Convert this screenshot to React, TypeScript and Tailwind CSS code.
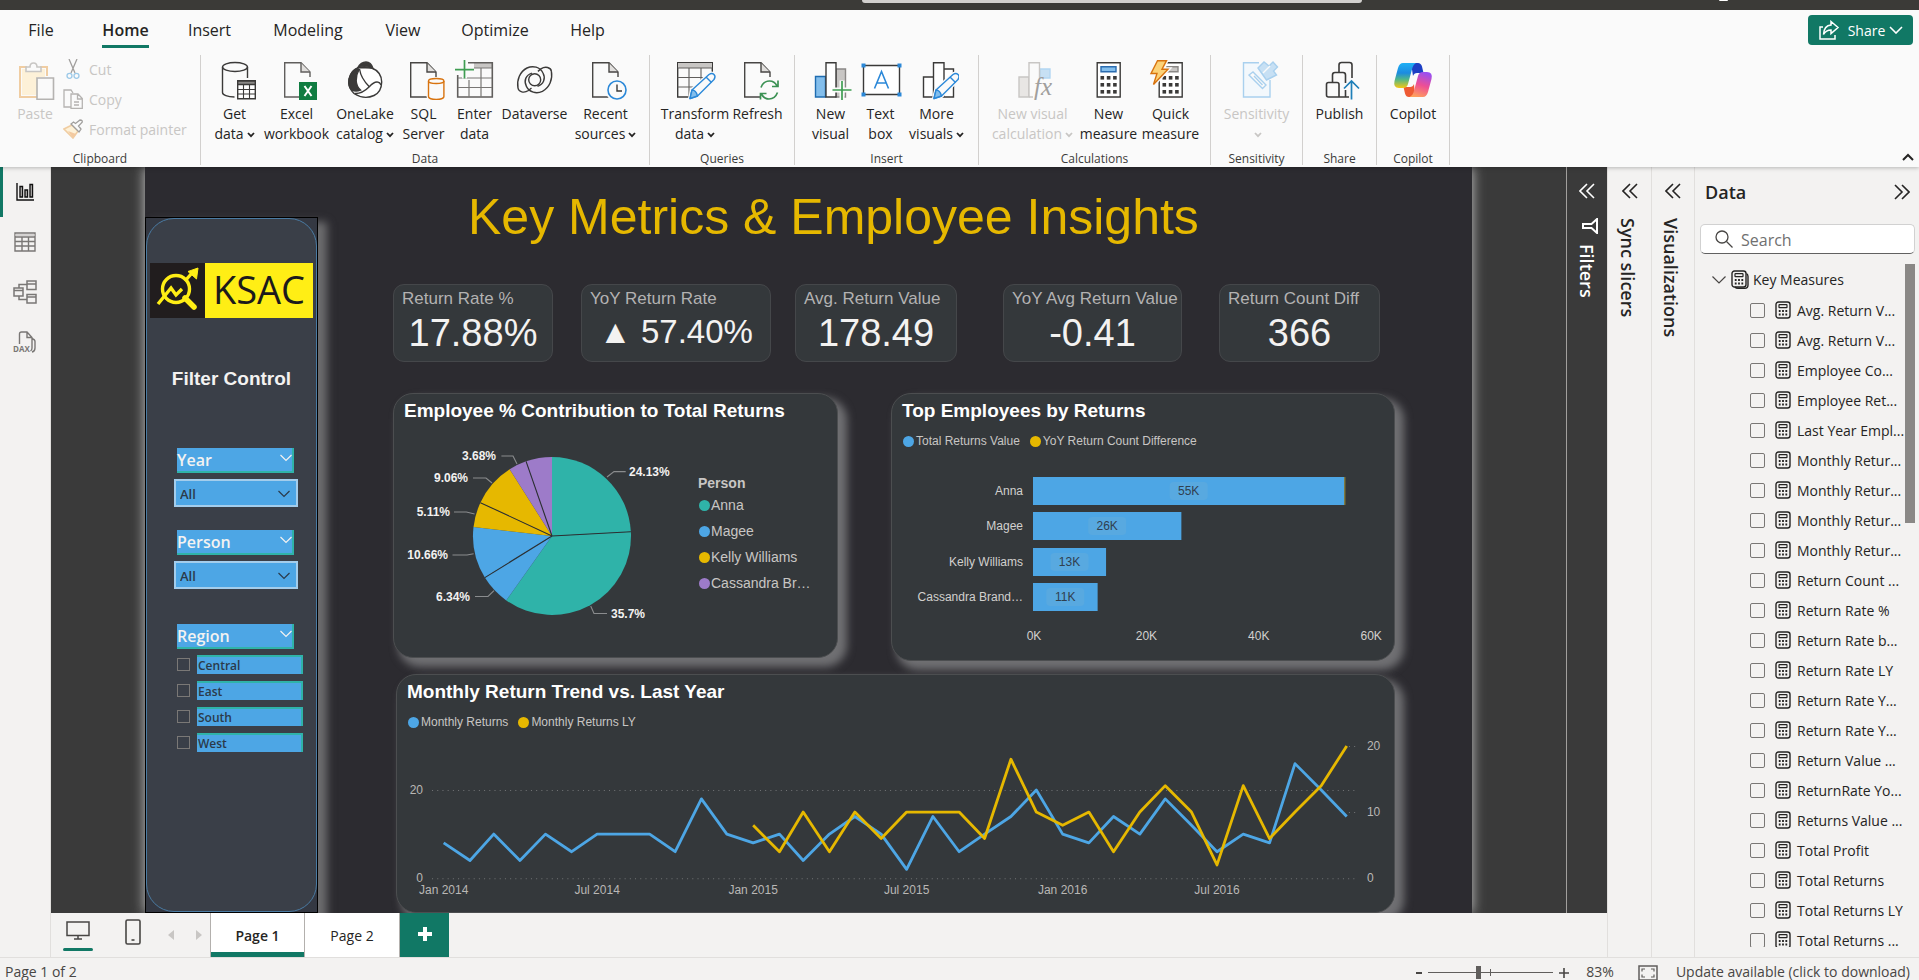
import type { ReactNode } from "react";

const INK = "#3b3a39";
const MUTED = "#c8c6c4";
const BLUE = "#4da6e5";
const YELLOW = "#e6b800";
const TEAL = "#2fb3a9";
const PURPLE = "#9d7bc9";

/* ---------- Ribbon icons ---------- */

function Ico({ children }: { children: ReactNode }) {
  return (
    <svg viewBox="0 0 44 40" className="h-10 w-11 shrink-0" fill="none" stroke={INK} strokeWidth="1.4" aria-hidden="true">
      {children}
    </svg>
  );
}

function DocShape({ x = 9, color = "#484644" }: { x?: number; color?: string }) {
  return (
    <g transform={`translate(${x} 0)`} stroke={color}>
      <path d="M26 17V12L17 2.700H.7V37H17" />
      <path d="M17 3V12h9" fill="#e1dfdd" />
    </g>
  );
}

function Pencil({ x = 0 }: { x?: number }) {
  return (
    <g transform={`translate(${x} 0)`} stroke="#2b88d8" strokeLinejoin="round">
      <path d="M17 38.5l2-8.5L36 14.5q3-2 5 0t0 5L24.500 36z" fill="#fafafa" stroke="#fafafa" strokeWidth="4" />
      <path d="M17 38.5l2-8.5L36 14.500q3-2 5 0t0 5L24.500 36z" fill="#fafafa" />
      <path d="M17 38.500l2-8.500q4 0 5.500 6z" fill="#83beec" />
      <path d="M33 17l5.500 5.500" />
    </g>
  );
}

const GetDataIcon = () => (
  <Ico>
    <ellipse cx="22" cy="7" rx="12.500" ry="4.500" />
    <path d="M9.500 7v25.500c0 2.500 5 4.500 12 4.500M34.500 7v11" />
    <path d="M24.700 20.700h17.600v18H24.700z" fill="#fff" />
    <path d="M24.700 21h17.600v3.500H24.700z" fill="#8a8886" />
    <path d="M24.700 29.500h17.600M24.700 34h17.600M30.500 24.500v14M36.500 24.500v14" strokeWidth="1.100" />
  </Ico>
);
const ExcelIcon = () => (
  <Ico>
    <DocShape color="#605e5c" />
    <path d="M24 22h18v18H24z" fill="#107c41" stroke="none" />
    <path d="M29.500 26l7 10M36.500 26l-7 10" stroke="#fff" strokeWidth="2" />
  </Ico>
);
const OneLakeIcon = () => (
  <Ico>
    <path d="M29 8Q38.500 12 38.700 22Q38.500 32 31 35.500Q21 40 11 33.500Q5 28 6 19Q8 10 16 7.500z" fill="#fff" />
    <path d="M14.500 8Q18 2 23 2t7 6.500Q22 5 14.500 8z" fill={INK} />
    <path d="M14 8.500C5 13 3.500 26 9 30C12 31.500 15 31 17.500 30C12 25 12 17 16 9.500z" fill={INK} />
    <path d="M16.500 9Q18 18.500 26.300 26.700M11.500 33.500Q19 34 26.300 26.700Q31 21.500 34.500 22Q37 22.300 38 25" />
  </Ico>
);
const SqlIcon = () => (
  <Ico>
    <DocShape x={8} />
    <path d="M26.500 21v15.500c0 1.700 3.500 3 7.700 3s7.700-1.300 7.700-3V21" fill="#fafafa" stroke="#fafafa" strokeWidth="4" />
    <path d="M26.500 21v15.500c0 1.700 3.500 3 7.700 3s7.700-1.300 7.700-3V21" fill="#fafafa" stroke="#d8730f" />
    <ellipse cx="34.200" cy="21" rx="7.700" ry="2.500" fill="#fafafa" stroke="#d8730f" />
  </Ico>
);
const EnterIcon = () => (
  <Ico>
    <path d="M21 3h18v5H21z" fill="#c8c6c4" stroke="none" />
    <path d="M15 2.700h24.300V37H4.700V15" stroke="#605e5c" strokeWidth="1.600" />
    <path d="M21 8h18M5 18h34M5 27.500h34M16 20v17M28 8v29" strokeWidth="1.200" stroke="#797775" />
    <path d="M11.500 0v18.500M2 9.700h19" stroke="#fafafa" strokeWidth="5" />
    <path d="M11.500 0v18.500M2 9.700h19" stroke="#3f9d52" strokeWidth="1.700" />
  </Ico>
);
const DATAVERSE_LEAF = "M24.500 26.300C30.500 24.500 33 18.500 30 13C27 7 20 5.200 14 8C7 11.500 3.500 20 5 28C5.500 32 11 33.500 15.500 30.500L18.500 28";
const DataverseIcon = () => (
  <Ico>
    <circle cx="21.700" cy="19.700" r="6" />
    <path d={DATAVERSE_LEAF} />
    <path d={DATAVERSE_LEAF} transform="rotate(180 21.700 19.700)" />
  </Ico>
);
const RecentIcon = () => (
  <Ico>
    <DocShape x={8} />
    <circle cx="33" cy="30" r="9" fill="#fafafa" stroke="#fafafa" strokeWidth="5" />
    <circle cx="33" cy="30" r="9" fill="#fafafa" stroke="#2b88d8" strokeWidth="1.600" />
    <path d="M33 24.500V31h5" />
  </Ico>
);
const TransformIcon = () => (
  <Ico>
    <path d="M4.700 2.700h34.600V37H4.700z" />
    <path d="M5 3h34v5H5z" fill="#c8c6c4" stroke="none" />
    <path d="M4.700 8h34.600M4.700 17.500h34.600M4.700 27h34.600M16 8v29M28 8v29" strokeWidth="1.100" stroke="#605e5c" />
    <path d="M24 38.500l17-19v19z" fill="#fafafa" stroke="none" />
    <Pencil />
  </Ico>
);
const RefreshIcon = () => (
  <Ico>
    <DocShape x={8} />
    <circle cx="33" cy="30" r="11" fill="#fafafa" stroke="none" />
    <path d="M25 27.500q2.500-6.500 8.500-6.500q5 0 7.500 5M42 20.500V26.500h-6M41.500 32.500q-2.500 6.500-8.500 6.500q-5 0-7.500-5M24.500 39.500V33.500h6" stroke="#3b9153" strokeWidth="1.700" />
  </Ico>
);
const NewVisualIcon = () => (
  <Ico>
    <path d="M27 9h9.500v28H27z" fill="#c8c6c4" stroke="#8a8886" />
    <path d="M6.500 16.500h10V37h-10z" fill="#83beec" stroke="#1f6cb0" />
    <path d="M17 2.700h10V37H17z" fill="#fff" />
    <path d="M33 20.500v20M23.500 30h19" stroke="#fafafa" strokeWidth="5" />
    <path d="M33 21v19M23.500 30h19" stroke="#3f9d52" strokeWidth="1.700" />
  </Ico>
);
const TextBoxIcon = () => (
  <Ico>
    <path d="M4.500 5.500h36v29h-36z" fill="#fff" />
    <path d="M2.500 3.500h4v4h-4zM38.500 3.500h4v4h-4zM2.500 32.500h4v4h-4zM38.500 32.500h4v4h-4z" fill="#2b88d8" stroke="none" />
    <path d="M15.500 28.500L22.500 11.500L29.500 28.500M18 23h9" stroke="#2b88d8" strokeWidth="1.600" />
  </Ico>
);
const MoreVisualsIcon = () => (
  <Ico>
    <path d="M29 9h9.500v28H29zM8.500 17h10v20h-10zM18.500 2.700h10.500V37H18.500z" fill="#fff" />
    <Pencil x={2} />
  </Ico>
);
const VisualCalcIcon = () => (
  <Ico>
    <g stroke="#c8c6c4">
      <path d="M8 17h10v20H8z" fill="#e8e6e4" />
      <path d="M29 9h10v9H29z" fill="#c7e0f4" stroke="#b3d6f2" />
      <path d="M18 37V2.700h10.500V19M18 37h4" fill="#fafafa" />
    </g>
    <text x="23" y="35" className="font-['Liberation_Serif',serif] text-[25px] italic" fill="#a19f9d" stroke="none">fx</text>
  </Ico>
);
function Keypad({ x }: { x: number }) {
  return (
    <g transform={`translate(${x} 0)`}>
      <path d="M.7 2.700h23V37H.7z" fill="#fff" />
      {[16, 23, 30].map((y) => [4, 10.3, 16.6].map((k) => <rect key={`${k}-${y}`} x={k} y={y} width="3.600" height="3.600" fill={INK} stroke="none" />))}
    </g>
  );
}
const NewMeasureIcon = () => (
  <Ico>
    <Keypad x={9.5} />
    <path d="M14 6.700h15v5H14z" fill="#83beec" stroke="#2b6cb0" />
  </Ico>
);
const QuickMeasureIcon = () => (
  <Ico>
    <Keypad x={9.5} />
    <path d="M18 6.700h11v5H18z" fill="#c8c6c4" stroke="#8a8886" />
    <path d="M8.500 .7h9l-4.500 8.500h6L4.500 24.500l3.500-11H2z" fill="#fce08a" stroke="#fafafa" strokeWidth="4" />
    <path d="M8.500 .7h9l-4.500 8.500h6L4.500 24.500l3.500-11H2z" fill="#fcd277" stroke="#d8730f" strokeWidth="1.400" />
  </Ico>
);
const SensitivityIcon = () => (
  <Ico>
    <g stroke="#a9d0ee">
      <path d="M24 2.700H8.500V37H35V20" fill="#f3f8fc" />
      <path d="M14 15l4-3 13 13-3.500 3.500z" fill="#fafafa" />
      <path d="M19 16l8.500 9" />
      <path d="M23 8l6-6 5 4 4-4 4.500 5-4 4 3 4-6 3-4 2z" fill="#c7e0f4" />
      <path d="M28 13l7-7" stroke="#fafafa" />
    </g>
  </Ico>
);
const PublishIcon = () => (
  <Ico>
    <g strokeWidth="1.600">
      <path d="M21 12V5q0-2.500 2.500-2.500h8Q34 2.500 34 5v13" />
      <path d="M14.500 22V15q0-2.500 2.500-2.500h8q2.500 0 2.500 2.500v8" />
      <path d="M8.500 24.500q0-2 2-2h8.500q2 0 2 2V37H10.500q-2 0-2-2zM21 37h10M27.500 30v7" />
    </g>
    <path d="M33.500 39.500V21M26 28.500L33.500 21l7.500 7.500" stroke="#1f7fb8" strokeWidth="1.700" />
  </Ico>
);
const CopilotIcon = () => (
  <Ico>
    <defs>
      <linearGradient id="cpA" x1="0" y1="0" x2="0" y2="1">
        <stop offset="0" stopColor="#1fb0f5" />
        <stop offset=".4" stopColor="#1c8be0" />
        <stop offset=".65" stopColor="#4fb68a" />
        <stop offset="1" stopColor="#f6c713" />
      </linearGradient>
      <linearGradient id="cpB" x1=".6" y1="0" x2=".3" y2="1">
        <stop offset="0" stopColor="#9a4ff0" />
        <stop offset=".5" stopColor="#ee4f94" />
        <stop offset="1" stopColor="#ffa15c" />
      </linearGradient>
    </defs>
    <g stroke="none">
      <path d="M20 3h7q3 0 4 3.500l1.500 6.500H26q-3 0-4 3z" fill="#1c3fc4" />
      <path d="M24 37h-6q-3 0-4-3.500L12.500 27H19q3 0 4-3z" fill="#ee5a33" />
      <path d="M12 3H25q-2.500 1-3.500 4.500L17 24q-1 4-5 4H8q-6 0-4.500-7L7 8q1.500-5 5-5z" fill="url(#cpA)" />
      <path d="M32 37H18.500q3-1 4-4.500L27 16q1-4 5-4h4q6 0 4.500 7L37 32q-1.500 5-5 5z" fill="url(#cpB)" />
    </g>
  </Ico>
);

/* ---------- Ribbon ---------- */

function Caret() {
  return (
    <svg viewBox="0 0 8 6" className="ml-[3px] inline-block h-[6px] w-2" fill="none" stroke="currentColor" strokeWidth="1.800" aria-hidden="true">
      <path d="M1 1l3 3.200L7 1" />
    </svg>
  );
}

type Cmd = { l1: string; l2?: string; caret?: boolean; w: string; icon: ReactNode; off?: boolean };

function Command({ l1, l2, caret, w, icon, off }: Cmd) {
  return (
    <button type="button" disabled={off} className={`${w} flex flex-col items-center text-[14px] leading-5 whitespace-nowrap ${off ? "text-[#c8c6c4]" : "text-[#252423]"}`}>
      {icon}
      <span className="mt-1">{l1}</span>
      {(l2 || caret) && (
        <span>
          {l2}
          {caret && <Caret />}
        </span>
      )}
    </button>
  );
}

function Group({ name, cmds, className = "", children }: { name: string; cmds?: Cmd[]; className?: string; children?: ReactNode }) {
  return (
    <section aria-label={name} className={`${className} flex h-[110px] shrink-0 flex-col border-r border-[#d2d0ce]`}>
      <div className="flex h-[95px] shrink-0 items-start justify-center pt-[5px]">
        {children}
        {cmds?.map((c) => <Command key={c.l1 + c.l2} {...c} />)}
      </div>
      <h2 className="shrink-0 text-center text-[12px] leading-[17px] text-[#3b3a39]">{name}</h2>
    </section>
  );
}

const TABS = [
  { t: "File", w: "w-[82px]" },
  { t: "Home", w: "w-[87px]" },
  { t: "Insert", w: "w-[81px]" },
  { t: "Modeling", w: "w-[116px]" },
  { t: "View", w: "w-[74px]" },
  { t: "Optimize", w: "w-[110px]" },
  { t: "Help", w: "w-[75px]" },
];

function Ribbon() {
  return (
    <header className="relative z-10 shrink-0 bg-[#fafafa] shadow-[0_1px_4px_rgba(0,0,0,0.25)]">
      <div className="relative flex h-[10px] justify-center bg-[#3b3a37]">
        <div className="ml-[305px] h-[3px] w-[500px] rounded-b-sm bg-[#d2d0ce]" />
        <span className="absolute top-0 right-[191px] h-px w-[9px] rounded-b bg-white" />
      </div>
      <div className="flex h-[45px] items-start justify-between pr-[6px]">
        <nav aria-label="Ribbon tabs" className="flex">
          {TABS.map(({ t, w }) => (
            <button key={t} type="button" className={`${w} flex justify-center text-[16px] leading-6 text-[#252423]`}>
              <span className={`mt-2 h-[30px] border-b-3 ${t === "Home" ? "border-[#117865] font-semibold" : "border-transparent"}`}>{t}</span>
            </button>
          ))}
        </nav>
        <button type="button" className="mt-[5px] flex h-[30px] w-[105px] items-center justify-center gap-2 rounded bg-[#117865] text-[14px] text-white">
          <svg viewBox="0 0 22 20" className="h-5 w-[22px]" fill="none" stroke="#fff" strokeWidth="1.500" aria-hidden="true">
            <path d="M5 7H2v12h15v-4" />
            <path d="M13 1.500L20 7.500l-7 6V10q-5 0-7.500 4.500Q6 5.500 13 5z" />
          </svg>
          <span className="flex items-center">
            Share
            <svg viewBox="0 0 14 8" className="ml-1 h-2 w-[14px]" fill="none" stroke="#fff" strokeWidth="1.600" aria-hidden="true">
              <path d="M1 1l6 6 6-6" />
            </svg>
          </span>
        </button>
      </div>
      <div className="flex h-[112px] items-start">
        <Group name="Clipboard" className="w-[201px]">
          <div className="flex w-full gap-2 pl-[15px] text-[14px] text-[#c8c6c4]">
            <button type="button" disabled className="flex w-10 flex-col items-center leading-5">
              <svg viewBox="0 0 40 40" className="h-10 w-10" fill="none" strokeWidth="1.600" aria-hidden="true">
                <path d="M22 37H5V7h7M25 7h7v9" stroke="#f0cda2" strokeWidth="2" />
                <path d="M7 9h4v3h15V9h4v8h-8v18H7z" fill="#fdf1d8" />
                <path d="M11 11.500V7h4q0-4 3.500-4T22 7h4v4.500z" stroke={MUTED} fill="#fafafa" />
                <path d="M22 18h16.500v21.300H22z" stroke="#b5b3b1" fill="#fafafa" />
              </svg>
              <span className="mt-1">Paste</span>
            </button>
            <div className="-mt-px flex flex-col">
              <button type="button" disabled className="flex h-5 items-center gap-[6px]">
                <svg viewBox="0 0 20 20" className="h-5 w-5" fill="none" aria-hidden="true">
                  <path d="M6 0l6 14M14 0L8 14" stroke="#a19f9d" strokeWidth="1.300" />
                  <circle cx="6.500" cy="16.800" r="2.500" stroke="#9cc9e8" strokeWidth="1.300" />
                  <circle cx="13.500" cy="16.800" r="2.500" stroke="#9cc9e8" strokeWidth="1.300" />
                </svg>
                Cut
              </button>
              <button type="button" disabled className="mt-[10px] flex h-5 items-center gap-[6px]">
                <svg viewBox="0 0 20 20" className="h-5 w-5" fill="none" stroke="#b5b3b1" strokeWidth="1.300" aria-hidden="true">
                  <path d="M8 18H1V1h7l2 3" />
                  <path d="M8 5h7l4.300 4.500V19.300H8zM14.500 5v5h5M11 13h5M11 16h5" fill="#fafafa" />
                </svg>
                Copy
              </button>
              <button type="button" disabled className="mt-[10px] flex h-5 items-center gap-[6px]">
                <svg viewBox="0 0 20 20" className="h-5 w-5" fill="none" strokeWidth="1.300" aria-hidden="true">
                  <path d="M9 6L1 10l9 9 5-7z" fill="#fdf1d8" stroke="#f0cda2" strokeWidth="1.600" />
                  <path d="M5 12l8 3-3 4z" fill="#f3c9a0" />
                  <path d="M8 5l8 8 2-3-2.500-3L19 3.500Q20 1 17 1L12.500 4.500 10.500 3z" stroke="#a19f9d" fill="#fafafa" />
                </svg>
                Format painter
              </button>
            </div>
          </div>
        </Group>
        <Group
          name="Data"
          className="w-[449px]"
          cmds={[
            { l1: "Get", l2: "data", caret: true, w: "w-[52px]", icon: <GetDataIcon /> },
            { l1: "Excel", l2: "workbook", w: "w-[72px]", icon: <ExcelIcon /> },
            { l1: "OneLake", l2: "catalog", caret: true, w: "w-[65px]", icon: <OneLakeIcon /> },
            { l1: "SQL", l2: "Server", w: "w-[52px]", icon: <SqlIcon /> },
            { l1: "Enter", l2: "data", w: "w-[50px]", icon: <EnterIcon /> },
            { l1: "Dataverse", w: "w-[70px]", icon: <DataverseIcon /> },
            { l1: "Recent", l2: "sources", caret: true, w: "w-[72px]", icon: <RecentIcon /> },
          ]}
        />
        <Group
          name="Queries"
          className="w-[145px]"
          cmds={[
            { l1: "Transform", l2: "data", caret: true, w: "w-[71px]", icon: <TransformIcon /> },
            { l1: "Refresh", w: "w-[54px]", icon: <RefreshIcon /> },
          ]}
        />
        <Group
          name="Insert"
          className="w-[184px]"
          cmds={[
            { l1: "New", l2: "visual", w: "w-[50px]", icon: <NewVisualIcon /> },
            { l1: "Text", l2: "box", w: "w-[50px]", icon: <TextBoxIcon /> },
            { l1: "More", l2: "visuals", caret: true, w: "w-[62px]", icon: <MoreVisualsIcon /> },
          ]}
        />
        <Group
          name="Calculations"
          className="w-[232px]"
          cmds={[
            { l1: "New visual", l2: "calculation", caret: true, w: "w-[89px]", icon: <VisualCalcIcon />, off: true },
            { l1: "New", l2: "measure", w: "w-[63px]", icon: <NewMeasureIcon /> },
            { l1: "Quick", l2: "measure", w: "w-[61px]", icon: <QuickMeasureIcon /> },
          ]}
        />
        <Group name="Sensitivity" className="w-[92px]" cmds={[{ l1: "Sensitivity", caret: true, w: "w-20", icon: <SensitivityIcon />, off: true }]} />
        <Group name="Share" className="w-[74px]" cmds={[{ l1: "Publish", w: "w-16", icon: <PublishIcon /> }]} />
        <Group name="Copilot" className="w-[73px]" cmds={[{ l1: "Copilot", w: "w-16", icon: <CopilotIcon /> }]} />
        <button type="button" aria-label="Collapse ribbon" className="mr-[5px] mb-[6px] ml-auto self-end">
          <svg viewBox="0 0 12 8" className="h-2 w-3" fill="none" stroke="#252423" strokeWidth="2" aria-hidden="true">
            <path d="M1 7l5-5 5 5" />
          </svg>
        </button>
      </div>
    </header>
  );
}

/* ---------- Left rail ---------- */

function LeftRail() {
  const btn = "flex h-[50px] w-full items-center justify-center border-l-3 pr-1";
  return (
    <nav aria-label="Views" className="flex w-[51px] shrink-0 flex-col border-r border-[#e1dfdd] bg-[#f3f2f1]">
      <button type="button" aria-label="Report view" className={`${btn} border-[#117865]`}>
        <svg viewBox="0 0 18 18" className="h-[18px] w-[18px]" fill="none" stroke="#111" strokeWidth="1.400" aria-hidden="true">
          <path d="M1 0v17h17" />
          <path d="M4 3.500h2.500V14H4zM9 7h2.500v7H9zM14 1.500h2.500V14H14z" fill="#c8c6c4" />
        </svg>
      </button>
      <button type="button" aria-label="Table view" className={`${btn} border-transparent`}>
        <svg viewBox="0 0 22 20" className="h-5 w-[22px]" fill="none" stroke="#797775" strokeWidth="1.400" aria-hidden="true">
          <path d="M1 1h20v18H1zM1 5h20M1 9.500h20M1 14h20M8 5v14M14.500 5v14" />
          <path d="M1 3h20" stroke="#c8c6c4" />
        </svg>
      </button>
      <button type="button" aria-label="Model view" className={`${btn} border-transparent`}>
        <svg viewBox="0 0 24 24" className="h-6 w-6" fill="none" stroke="#797775" strokeWidth="1.500" aria-hidden="true">
          <path d="M1 8h9v8H1zM1 10.500h9M14 1h9v8.500h-9zM14 4h9M14 14.500h9V23h-9zM14 17h9M6 8V4.500h8M6 16v3.500h8" />
        </svg>
      </button>
      <button type="button" aria-label="DAX query view" className={`${btn} border-transparent`}>
        <svg viewBox="0 0 24 22" className="h-[22px] w-6" fill="none" stroke="#797775" strokeWidth="1.400" aria-hidden="true">
          <path d="M6.500 13V3q0-2 2-2H14l5 5.500V17q0 2-1.500 3M14 1v5.500h5M19 7.500q3 1 3 3V17q0 3.500-3 4" />
          <text x="0" y="21" className="font-['Open_Sans',sans-serif] text-[8px] font-bold" fill="#797775" stroke="none">DAX</text>
        </svg>
      </button>
    </nav>
  );
}

/* ---------- Report: filter panel ---------- */

function Chevron({ className = "" }: { className?: string }) {
  return (
    <svg viewBox="0 0 12 8" className={`h-2 w-3 ${className}`} fill="none" stroke="currentColor" strokeWidth="1.200" aria-hidden="true">
      <path d="M.5 1L6 6.500 11.500 1" />
    </svg>
  );
}

function SlicerHead({ id, title }: { id: string; title: string }) {
  return (
    <div className="ml-[3px] flex h-[25px] w-[117px] justify-between border-r-2 border-b-2 border-[#2fb3a9] bg-[#4da6e5] text-[#f3f2f1]">
      <label htmlFor={id} className="text-[16px] leading-6 font-semibold">{title}</label>
      <Chevron className="mt-[6px]" />
    </div>
  );
}

function SlicerSelect({ id, title }: { id: string; title: string }) {
  return (
    <div className="flex w-[124px] flex-col gap-[6px]">
      <SlicerHead id={id} title={title} />
      <div className="relative text-[#2b3a4a]">
        <select id={id} className="h-7 w-full appearance-none border-2 border-[#a3cdec] bg-[#4da6e5] pt-[2px] pl-1 text-[13px] leading-5 font-semibold">
          <option>All</option>
        </select>
        <Chevron className="pointer-events-none absolute top-[11px] right-2" />
      </div>
    </div>
  );
}

function FilterPanel() {
  return (
    <aside aria-label="Filter control" className="relative mt-[50px] flex w-[173px] shrink-0 border border-black bg-[#343842] shadow-[7px_7px_8px_2px_#6c6c6e]">
      <div className="flex flex-1 flex-col rounded-[28px] border border-[#4a7ba3] bg-[#3a3f48] pt-11">
        <div className="mx-[3px] flex h-[55px] text-[#1c1a1b]">
          <svg viewBox="0 0 55 55" className="h-full w-[55px] bg-[#211d1e]" fill="none" stroke="#ffee15" aria-hidden="true">
            <circle cx="26" cy="26" r="13.500" strokeWidth="3.400" />
            <path d="M8 41l13-16 5 7 6-6M35 18l7-8" strokeWidth="3.400" />
            <path d="M35 35l9 9" strokeWidth="5.500" strokeLinecap="round" />
            <path d="M38 8.500L48 5l-1.500 11z" fill="#ffee15" />
          </svg>
          <div className="flex flex-1 items-center justify-center bg-[#ffee15] pb-[3px] text-[38px] leading-none">KSAC</div>
        </div>
        <h2 className="mt-[49px] text-center font-['Liberation_Sans',Arial,sans-serif] text-[19px] leading-6 font-bold text-[#f3f2f1]">Filter Control</h2>
        <div className="mt-[57px] flex flex-col pl-[27px]">
          <SlicerSelect id="year" title="Year" />
          <div className="mt-[23px]">
            <SlicerSelect id="person" title="Person" />
          </div>
          <fieldset className="mt-[35px] flex flex-col gap-[7px]">
            <legend className="mb-[6px]">
              <SlicerHead id="region-central" title="Region" />
            </legend>
            {["Central", "East", "South", "West"].map((r) => (
              <div key={r} className="flex h-[19px] items-center gap-[7px] pl-[3px]">
                <input id={`region-${r.toLowerCase()}`} type="checkbox" className="h-[13px] w-[13px] appearance-none border border-[#7a7876]" />
                <label htmlFor={`region-${r.toLowerCase()}`} className="h-full w-[106px] border-t-2 border-r-2 border-[#2fb3a9] bg-[#4da6e5] pl-px text-[12px] leading-[18px] font-semibold text-[#2b3a4a]">{r}</label>
              </div>
            ))}
          </fieldset>
        </div>
      </div>
    </aside>
  );
}

/* ---------- Report: KPI cards and charts ---------- */

function Kpi({ label, value, small }: { label: string; value: string; small?: boolean }) {
  return (
    <article className="flex h-[78px] flex-col rounded-[11px] border border-[#45474a] bg-[#34383b] pt-1 whitespace-nowrap">
      <h3 className="pl-2 text-[17px] leading-5 text-[#b3b2b2]">{label}</h3>
      <p className={`text-center ${small ? "text-[33px] leading-[46px]" : "text-[38px] leading-[49px]"} text-[#f3f2f1]`}>{value}</p>
    </article>
  );
}

function Card({ title, className = "", children }: { title: string; className?: string; children: ReactNode }) {
  return (
    <section className={`${className} flex flex-col rounded-[20px] border border-[#4c4e50] bg-[#34383b] px-[10px] pt-[5px] shadow-[7px_7px_8px_2px_#707073]`}>
      <h2 className="text-[19px] leading-6 font-bold whitespace-nowrap text-white">{title}</h2>
      {children}
    </section>
  );
}

function Legend({ items }: { items: { name: string; color: string }[] }) {
  return (
    <ul className="mt-[9px] flex h-[18px] items-center gap-[10px] pl-px text-[12px] text-[#c8c6c4]">
      {items.map((i) => (
        <li key={i.name} className="flex items-center gap-[2px] whitespace-nowrap">
          <svg viewBox="0 0 11 11" className="h-[11px] w-[11px]" aria-hidden="true">
            <circle cx="5.500" cy="5.500" r="5.500" fill={i.color} />
          </svg>
          {i.name}
        </li>
      ))}
    </ul>
  );
}

const SLICES = [
  { v: 24.13, c: TEAL },
  { v: 35.7, c: TEAL },
  { v: 6.34, c: BLUE },
  { v: 10.66, c: BLUE },
  { v: 5.11, c: YELLOW },
  { v: 9.06, c: YELLOW },
  { v: 3.68, c: PURPLE },
  { v: 5.32, c: PURPLE },
];
const PIE_LABELS = [
  { t: "24.13%", x: 225, y: 48, a: "start", p: "203,53 210,47.600 221.700,47.600" },
  { t: "35.7%", x: 207, y: 190, a: "start", p: "186.700,182 190,189.500 203,189.500" },
  { t: "6.34%", x: 66, y: 173, a: "end", p: "71,172.500 84,172.500 90,166.700" },
  { t: "10.66%", x: 44, y: 131, a: "end", p: "48.500,131 63,131 69.600,129.700" },
  { t: "5.11%", x: 46, y: 88, a: "end", p: "50,88 62.400,88 70.600,90" },
  { t: "9.06%", x: 64, y: 54, a: "end", p: "69,54 82,54 88,59" },
  { t: "3.68%", x: 92, y: 32, a: "end", p: "97.400,32 109,32 113,40" },
] as const;

function pieGeometry() {
  const cx = 148;
  const cy = 112;
  const r = 79;
  let acc = 0;
  const point = (f: number) => {
    const a = f * 2 * Math.PI;
    return `${(cx + r * Math.sin(a)).toFixed(2)} ${(cy - r * Math.cos(a)).toFixed(2)}`;
  };
  return SLICES.map((s, i) => {
    const from = point(acc / 100);
    acc += s.v;
    const to = point(acc / 100);
    return {
      d: `M${cx} ${cy}L${from}A${r} ${r} 0 0 1 ${to}Z`,
      cut: i % 2 === 0 ? `M${cx} ${cy}L${to}` : null,
      c: s.c,
    };
  });
}

function PieCard() {
  const parts = pieGeometry();
  return (
    <Card title="Employee % Contribution to Total Returns" className="h-[265px]">
      <div className="mt-px flex gap-[13px]">
        <svg viewBox="0 0 280 216" className="h-[216px] w-[280px] shrink-0" role="img" aria-label="Share of total returns by person">
          {parts.map((p, i) => <path key={i} d={p.d} fill={p.c} />)}
          {parts.map((p, i) => p.cut && <path key={i} d={p.cut} stroke="#2c3033" strokeWidth="1.100" />)}
          {PIE_LABELS.map((l) => (
            <g key={l.t}>
              <polyline points={l.p} fill="none" stroke="#8a8c8e" strokeWidth="1.100" />
              <text x={l.x} y={l.y + 4} textAnchor={l.a} fill="#f3f2f1" className="text-[12px] font-bold">{l.t}</text>
            </g>
          ))}
        </svg>
        <div className="pt-[50px] text-[14px] whitespace-nowrap text-[#c8c6c4]">
          <h3 className="pl-px leading-[18px] font-bold">Person</h3>
          <ul>
            {[
              ["Anna", TEAL],
              ["Magee", BLUE],
              ["Kelly Williams", YELLOW],
              ["Cassandra Br…", PURPLE],
            ].map(([n, c]) => (
              <li key={n} className="flex h-[26px] items-center gap-px pl-[2px]">
                <svg viewBox="0 0 11 11" className="h-[11px] w-[11px]" aria-hidden="true">
                  <circle cx="5.500" cy="5.500" r="5.500" fill={c} />
                </svg>
                {n}
              </li>
            ))}
          </ul>
        </div>
      </div>
    </Card>
  );
}

const BARS = [
  { n: "Anna", k: 55.4, t: "55K", y: 27 },
  { n: "Magee", k: 26.4, t: "26K", y: 62 },
  { n: "Kelly Williams", k: 13, t: "13K", y: 98 },
  { n: "Cassandra Brand…", k: 11.5, t: "11K", y: 133 },
];

function BarCard() {
  const x0 = 131;
  const perK = 5.62;
  return (
    <Card title="Top Employees by Returns">
      <Legend items={[{ name: "Total Returns Value", color: BLUE }, { name: "YoY Return Count Difference", color: YELLOW }]} />
      <svg viewBox="0 0 482 200" className="w-full text-[12px]" role="img" aria-label="Returns value by employee">
        {BARS.map((b) => {
          const w = b.k * perK;
          return (
            <g key={b.n}>
              <text x="121" y={b.y + 18} textAnchor="end" fill="#d2d0ce">{b.n}</text>
              <rect x={x0} y={b.y} width={w} height="28" fill={BLUE} />
              <rect x={x0 + w / 2 - 19} y={b.y + 5} width="38" height="18" rx="4" fill="#58a9e0" />
              <text x={x0 + w / 2} y={b.y + 18} textAnchor="middle" fill="#30404f">{b.t}</text>
            </g>
          );
        })}
        <rect x={x0 + 55.4 * perK} y="27" width="1" height="28" fill="#a08a28" />
        {[0, 20, 40, 60].map((k) => (
          <text key={k} x={x0 + 1 + k * perK} y="190" textAnchor="middle" fill="#d2d0ce">{k}K</text>
        ))}
      </svg>
    </Card>
  );
}

const MONTHLY = [8, 4, 10, 4, 10, 6, 10, 10, 10, 6, 18, 10, 8, 10, 4, 10, 14, 10, 2, 14, 6, 10, 14, 20, 10, 8, 14, 10, 18, 12, 6, 10, 8, 26, 20, 14];
const MONTHLY_LY = [8, 4, 10, 4, 10, 6, 10, 10, 10, 6, 18, 10, 8, 10, 4, 10, 14, 10, 2, 14, 6, 10, 14, 20];

function monthX(i: number) {
  const days = (Date.UTC(2014, i, 1) - Date.UTC(2014, 0, 1)) / 86400000;
  return 36.6 + days * 0.8471;
}

function TrendCard() {
  const blue = MONTHLY.map((v, i) => `${monthX(i).toFixed(1)},${(147 - v * 4.4).toFixed(1)}`).join(" ");
  const gold = MONTHLY_LY.map((v, i) => `${monthX(i + 12).toFixed(1)},${(147 - v * 6.6).toFixed(1)}`).join(" ");
  return (
    <Card title="Monthly Return Trend vs. Last Year" className="ml-[3px] min-h-0 flex-1">
      <Legend items={[{ name: "Monthly Returns", color: BLUE }, { name: "Monthly Returns LY", color: YELLOW }]} />
      <svg viewBox="0 0 976 176" className="w-full text-[12px]" fill="none" role="img" aria-label="Monthly returns against last year">
        <g stroke="#737577" strokeDasharray="1 4.200">
          <path d="M25 59.500H950M25 147.500H950M941 15.500H950M941 81.500H950" />
        </g>
        <polyline points={blue} stroke={BLUE} strokeWidth="2.800" strokeLinejoin="round" />
        <polyline points={gold} stroke={YELLOW} strokeWidth="2.800" strokeLinejoin="round" />
        <g fill="#b9b7b5">
          <text x="16" y="63" textAnchor="end">20</text>
          <text x="16" y="151" textAnchor="end">0</text>
          <text x="959" y="19">20</text>
          <text x="959" y="85">10</text>
          <text x="959" y="151">0</text>
          {["Jan 2014", "Jul 2014", "Jan 2015", "Jul 2015", "Jan 2016", "Jul 2016"].map((m, i) => (
            <text key={m} x={monthX(i * 6)} y="163" textAnchor="middle">{m}</text>
          ))}
        </g>
      </svg>
    </Card>
  );
}

function Report() {
  return (
    <div className="flex min-w-0 flex-1 overflow-hidden bg-[#3a3a3a] px-[94px]">
      <div className="flex min-w-0 flex-1 bg-[#2c2b30] shadow-[0_0_12px_#c8c8c8]">
        <FilterPanel />
        <main className="flex min-w-0 flex-1 flex-col pr-[77px] pl-[75px] font-['Liberation_Sans',Arial,sans-serif]">
          <h1 className="mt-5 pl-[75px] text-[50px] leading-[60px] whitespace-nowrap text-[#e6b800]">Key Metrics &amp; Employee Insights</h1>
          <div className="mt-[37px] mr-[15px] grid grid-cols-[160fr_28fr_190fr_24fr_162fr_46fr_179fr_37fr_161fr]">
            <div className="col-start-1"><Kpi label="Return Rate %" value="17.88%" /></div>
            <div className="col-start-3"><Kpi label="YoY Return Rate" value="▲ 57.40%" small /></div>
            <div className="col-start-5"><Kpi label="Avg. Return Value" value="178.49" /></div>
            <div className="col-start-7"><Kpi label="YoY Avg Return Value" value="-0.41" /></div>
            <div className="col-start-9"><Kpi label="Return Count Diff" value="366" /></div>
          </div>
          <div className="mt-[31px] mb-[13px] grid h-[268px] grid-cols-[445fr_504fr] gap-x-[53px]">
            <PieCard />
            <BarCard />
          </div>
          <TrendCard />
        </main>
      </div>
    </div>
  );
}

/* ---------- Page tabs ---------- */

function PageTabs() {
  return (
    <div className="flex h-[44px] shrink-0 bg-[#f3f2f1] text-[15px] text-[#252423]">
      <button type="button" aria-label="Desktop layout" className="ml-[12px] flex w-[30px] flex-col items-center justify-between pt-2 pb-[6px]">
        <svg viewBox="0 0 24 19" className="h-[19px] w-6" fill="none" stroke="#484644" strokeWidth="1.500" aria-hidden="true">
          <path d="M1 1h22v13.500H1zM12 14.500V18M8 18h8" />
        </svg>
        <span className="h-[3px] w-full rounded bg-[#117865]" />
      </button>
      <button type="button" aria-label="Mobile layout" className="ml-8 pb-[6px]">
        <svg viewBox="0 0 16 26" className="h-[26px] w-4" fill="none" stroke="#484644" strokeWidth="1.600" aria-hidden="true">
          <rect x="1" y="1" width="14" height="24" rx="1.500" />
          <path d="M6.500 21h3" />
        </svg>
      </button>
      <div className="ml-[27px] flex items-center gap-[22px] pr-2">
        <button type="button" aria-label="Previous page">
          <svg viewBox="0 0 6 10" className="h-[10px] w-[6px]" fill={MUTED} aria-hidden="true"><path d="M6 0v10L0 5z" /></svg>
        </button>
        <button type="button" aria-label="Next page">
          <svg viewBox="0 0 6 10" className="h-[10px] w-[6px]" fill={MUTED} aria-hidden="true"><path d="M0 0v10l6-5z" /></svg>
        </button>
      </div>
      <button type="button" className="w-[95px] border-r border-l border-[#b3b0ad] bg-white">
        <span className="flex h-full items-center justify-center border-b-5 border-[#117865] pt-[6px] text-[14px] font-semibold">Page 1</span>
      </button>
      <button type="button" className="w-[95px] border-r border-[#b3b0ad] bg-white pt-px text-[14px]">Page 2</button>
      <button type="button" aria-label="New page" className="flex w-[49px] items-center justify-center bg-[#117865]">
        <svg viewBox="0 0 14 14" className="mb-[3px] h-[14px] w-[14px]" fill="none" stroke="#fff" strokeWidth="4" aria-hidden="true">
          <path d="M7 0v14M0 7h14" />
        </svg>
      </button>
    </div>
  );
}

/* ---------- Right panes ---------- */

function DoubleChevron({ right }: { right?: boolean }) {
  return (
    <svg viewBox="0 0 16 16" className="h-4 w-4" fill="none" stroke="currentColor" strokeWidth="1.600" aria-hidden="true">
      {right ? <path d="M1 1l7 7-7 7M8 1l7 7-7 7" /> : <path d="M8 1L1 8l7 7M15 1L8 8l7 7" />}
    </svg>
  );
}

function SidePane({ title, className, icon }: { title: string; className: string; icon?: ReactNode }) {
  return (
    <button type="button" className={`${className} flex shrink-0 flex-col items-center pt-4`}>
      <DoubleChevron />
      {icon}
      <span className={`${icon ? "mt-[10px]" : "mt-[19px] pr-1"} text-[18px] leading-6 font-semibold whitespace-nowrap [writing-mode:vertical-rl]`}>{title}</span>
    </button>
  );
}

function MeasureIcon({ stacked }: { stacked?: boolean }) {
  return (
    <svg viewBox="0 0 18 19" className="h-[19px] w-[18px] shrink-0" fill="none" stroke="#252423" strokeWidth="1.400" aria-hidden="true">
      {stacked && <path d="M15.500 3.500q1.500 1 1.500 3v8.500q0 3.300-3.300 3.300H7q-2 0-3-1.300" />}
      <rect x="1" y="1" width="14" height="16" rx="2.500" />
      <rect x="4" y="3.700" width="8" height="3" rx=".5" strokeWidth="1.200" />
      <path d="M3.800 10h1.800M7.100 10h1.800M10.400 10h1.800M3.800 13.500h1.800M7.100 13.500h1.800M10.400 13.500h1.800" strokeWidth="1.800" />
    </svg>
  );
}

const MEASURES = [
  "Avg. Return V...", "Avg. Return V...", "Employee Co...", "Employee Ret...", "Last Year Empl...", "Monthly Retur...",
  "Monthly Retur...", "Monthly Retur...", "Monthly Retur...", "Return Count ...", "Return Rate %", "Return Rate b...",
  "Return Rate LY", "Return Rate Y...", "Return Rate Y...", "Return Value ...", "ReturnRate Yo...", "Returns Value ...",
  "Total Profit", "Total Returns", "Total Returns LY", "Total Returns ...",
];

function DataPane() {
  return (
    <aside aria-label="Data" className="flex w-[225px] shrink-0 flex-col border-l border-[#e1dfdd] bg-[#f3f2f1] pb-[10px] text-[#252423]">
      <div className="flex h-[50px] items-center justify-between pr-[9px] pl-[10px]">
        <h2 className="text-[18px] font-semibold">Data</h2>
        <button type="button" aria-label="Collapse data pane"><DoubleChevron right /></button>
      </div>
      <div className="mt-[7px] mr-1 ml-[5px] flex h-[30px] shrink-0 items-center gap-2 rounded-[5px] border border-[#d1d1d1] border-b-[#616161] bg-white pl-[14px]">
        <svg viewBox="0 0 18 18" className="h-[18px] w-[18px] shrink-0" fill="none" stroke="#484644" strokeWidth="1.300" aria-hidden="true">
          <circle cx="7" cy="7" r="6" />
          <path d="M11.500 11.500L17.500 17.500" />
        </svg>
        <input type="text" aria-label="Search" placeholder="Search" className="w-full min-w-0 bg-transparent pt-[2px] text-[16px] outline-none placeholder:text-[#707070]" />
      </div>
      <div className="mt-[10px] flex min-h-0 flex-1">
        <div className="min-w-0 flex-1 overflow-hidden text-[14px] whitespace-nowrap">
          <button type="button" className="flex h-[31px] items-center pl-[17px]">
            <svg viewBox="0 0 14 8" className="mr-[5px] h-2 w-[14px]" fill="none" stroke="#484644" strokeWidth="1.200" aria-hidden="true">
              <path d="M.5 .5L7 7 13.500 .5" />
            </svg>
            <MeasureIcon stacked />
            <span className="ml-1">Key Measures</span>
          </button>
          <ul>
            {MEASURES.map((m, i) => (
              <li key={i} className="flex h-[30px] items-center pl-[55px]">
                <input id={`measure-${i}`} type="checkbox" className="h-[15px] w-[15px] shrink-0 appearance-none rounded-[2px] border border-[#797775]" />
                <label htmlFor={`measure-${i}`} className="ml-[10px] flex items-center gap-1">
                  <MeasureIcon />
                  {m}
                </label>
              </li>
            ))}
          </ul>
        </div>
        <div className="mr-1 h-[259px] w-[10px] shrink-0 bg-[#8a8886]" />
      </div>
    </aside>
  );
}

/* ---------- Status bar ---------- */

function StatusBar() {
  return (
    <footer className="flex h-[23px] shrink-0 items-start border-t border-[#e1dfdd] bg-[#f3f2f1] pr-[9px] pl-[5px] text-[14px] text-[#484644]">
      <span className="mt-[6px] leading-4">Page 1 of 2</span>
      <div className="ml-auto flex items-start">
        <button type="button" aria-label="Zoom out" className="mt-[14px]">
          <span className="block h-[2px] w-[6px] bg-[#484644]" />
        </button>
        <div className="relative mt-2 ml-[6px] flex h-[13px] w-[125px] items-center">
          <span className="absolute top-[3px] left-[62px] h-[7px] w-px bg-[#605e5c]" />
          <input
            type="range"
            aria-label="Zoom level"
            min={0}
            max={200}
            defaultValue={80}
            className="h-[13px] w-full appearance-none bg-[linear-gradient(#605e5c,#605e5c)] bg-[length:100%_1px] bg-center bg-no-repeat [&::-webkit-slider-thumb]:h-[13px] [&::-webkit-slider-thumb]:w-[5px] [&::-webkit-slider-thumb]:appearance-none [&::-webkit-slider-thumb]:bg-[#605e5c]"
          />
        </div>
        <button type="button" aria-label="Zoom in" className="mt-[10px] ml-[6px]">
          <svg viewBox="0 0 10 10" className="h-[10px] w-[10px]" fill="none" stroke="#484644" strokeWidth="1.600" aria-hidden="true"><path d="M5 0v10M0 5h10" /></svg>
        </button>
        <span className="mt-[6px] ml-[17px] leading-4">83%</span>
        <button type="button" aria-label="Fit to page" className="mt-[7px] ml-6">
          <svg viewBox="0 0 20 16" className="h-4 w-5" fill="none" stroke="#605e5c" strokeWidth="1.500" aria-hidden="true">
            <path d="M1 1h18v14H1z" />
            <path d="M4 6.500V4h3M13 4h3v2.500M16 9.500V12h-3M7 12H4V9.500" strokeWidth="1.200" />
          </svg>
        </button>
        <a href="#update" className="mt-[6px] ml-[18px] leading-4">Update available (click to download)</a>
      </div>
    </footer>
  );
}

export default function App() {
  return (
    <div className="flex h-screen flex-col overflow-hidden bg-[#f3f2f1] font-['Open_Sans','Noto_Sans',sans-serif]">
      <Ribbon />
      <div className="flex min-h-0 flex-1">
        <LeftRail />
        <div className="flex min-w-0 flex-1 flex-col">
          <div className="flex min-h-0 flex-1">
            <Report />
            <SidePane
              title="Filters"
              className="w-[41px] border-l border-[#a19f9d] bg-[#3a3a3a] text-white"
              icon={
                <svg viewBox="0 0 16 16" className="mt-[19px] ml-[6px] h-4 w-4" fill="none" stroke="#fff" strokeWidth="2" aria-hidden="true">
                  <path d="M15 1v14L9.500 10H1V6h8.500z" />
                </svg>
              }
            />
          </div>
          <PageTabs />
        </div>
        <SidePane title="Sync slicers" className="w-[44px] border-l border-[#e1dfdd] bg-[#f3f2f1] text-[#252423]" />
        <SidePane title="Visualizations" className="w-[43px] border-l border-[#e1dfdd] bg-[#f3f2f1] text-[#252423]" />
        <DataPane />
      </div>
      <StatusBar />
    </div>
  );
}
